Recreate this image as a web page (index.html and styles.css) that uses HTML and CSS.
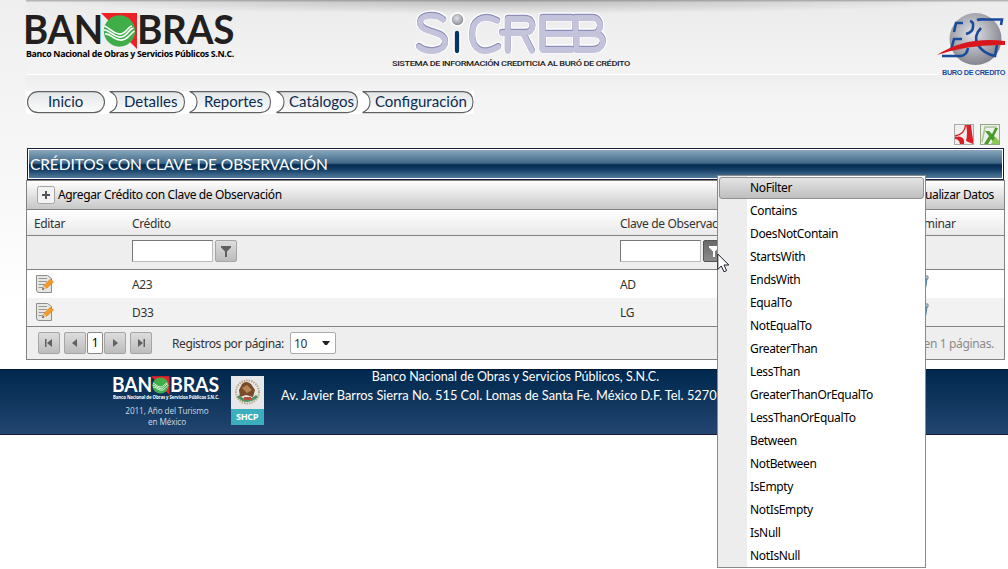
FILE: index.html
```html
<!DOCTYPE html>
<html lang="es">
<head>
<meta charset="utf-8">
<title>SICREB</title>
<link rel="stylesheet" href="styles.css">
</head>
<body>
<svg class="defs" width="0" height="0">
  <defs>
    <radialGradient id="orb" cx=".45" cy=".4" r=".6"><stop offset="0" stop-color="#e2e2e8"/><stop offset="1" stop-color="#85858f"/></radialGradient>
    <linearGradient id="pill" x1="0" y1="0" x2="0" y2="1"><stop offset="0" stop-color="#e3e6e7"/><stop offset="1" stop-color="#fbfbfb"/></linearGradient>
    <symbol id="emblem" viewBox="0 0 37 36">
      <path d="M0 0H36V36L30 30L9 9Z" fill="#ee2027"/>
      <circle cx="18.500" cy="18" r="15.700" fill="#3fae49"/>
      <path d="M3.500 13C9 15 11 20 18 21C25 22 27 13 31 13M3 17C9 17 11 23 18 24C26 25 27 16 32.500 15M4 21C10 20 12 27 19 27C27 28 29 20 33.500 18" fill="none" stroke="#fff" stroke-width="1.700"/>
    </symbol>
    <symbol id="edit" viewBox="0 0 20 20">
      <path d="M1.500 1.500H12.500L16.500 4.500V18.500H4Q1.500 18.500 1.500 16V2Z" fill="#e6e6e3" stroke="#8d8d8a"/>
      <path d="M3.500 4.500H12M3.500 7.500H12M3.500 10.500H10M3.500 13.500H8" stroke="#999"/>
      <path d="M8 14.500L9 11.500L15.500 5L18.500 8L12 14Z" fill="#f59a24" stroke="#d9771a" stroke-width=".6"/>
      <path d="M7.500 15.500L9 11.700L11.700 14.200Z" fill="#e8cf9e"/><path d="M7 16L8 13.800L9.300 15.200Z" fill="#333"/>
    </symbol>
    <symbol id="trash" viewBox="0 0 14 18"><path d="M0 1H13V4H0Z" fill="#c7dbe4" stroke="#6b8796"/><path d="M1 4H12L10 17H3Z" fill="#6fa6c0" stroke="#557f97"/><path d="M4 5V16M8 5V16" stroke="#d5e8f0"/></symbol>
  </defs>
</svg>
<header class="header">
  <svg class="brand" width="212" height="52" viewBox="0 0 212 52">
    <g fill="#231f20" font-family="Lato, sans-serif" font-weight="700" font-size="40.500">
      <text x="-3" y="35.500" textLength="80" lengthAdjust="spacingAndGlyphs">BAN</text>
      <text x="111" y="35.500" textLength="97" lengthAdjust="spacingAndGlyphs">BRAS</text>
    </g>
    <use href="#emblem" x="75" y="5" width="37" height="36"/>
    <text x="0" y="49" textLength="208" lengthAdjust="spacingAndGlyphs" class="brand-caption">Banco Nacional de Obras y Servicios Públicos S.N.C.</text>
  </svg>
  <svg class="sicreb" width="242" height="62" viewBox="0 0 242 62">
    <g fill="none" stroke-linecap="round" stroke-linejoin="round">
      <g transform="translate(1 0) scale(.965 1)">
        <path d="M52 11C46 5 28 5 28 14C28 25 54 21 54 33C54 44 34 44 27 38M108 12C91 4 82 13 82 26C82 41 93 47 109 38M119 42V10H137C147 10 147 24 137 24H113M135 25L144 42M185 9H155V41H185M157 25H206M189 24V9H207C217 9 217 25 207 25C222 25 220 41 207 41H190V24" stroke="#fff" stroke-width="9"/>
        <path d="M52 11C46 5 28 5 28 14C28 25 54 21 54 33C54 44 34 44 27 38M108 12C91 4 82 13 82 26C82 41 93 47 109 38M119 42V10H137C147 10 147 24 137 24H113M135 25L144 42M185 9H155V41H185M157 25H206M189 24V9H207C217 9 217 25 207 25C222 25 220 41 207 41H190V24" stroke="#8f8eb8" stroke-width="6.300"/>
        <path d="M52 12C46 6 28 6 28 15C28 26 54 22 54 34C54 45 34 45 27 39M108 13C91 5 82 14 82 27C82 42 93 48 109 39M119 43V11H137C147 11 147 25 137 25H113M135 26L144 43M185 10H155V42H185M157 26H206M189 25V10H207C217 10 217 26 207 26C222 26 220 42 207 42H190V25" stroke="#c3c3dc" stroke-width="5.800"/>
      </g>
      <path d="M65 26V43" stroke="#fff" stroke-width="7"/><path d="M65 25V43" stroke="#003467" stroke-width="4.300"/>
      <circle cx="65.500" cy="11.500" r="6.500" fill="url(#orb)" stroke="#fff" stroke-width="1.500"/>
    </g>
    <text x="0" y="57.500" textLength="238" lengthAdjust="spacingAndGlyphs" class="sicreb-caption">SISTEMA DE INFORMACIÓN CREDITICIA AL BURÓ DE CRÉDITO</text>
  </svg>
  <svg class="buro" width="72" height="68" viewBox="0 0 72 68">
    <circle cx="41.500" cy="31" r="26" fill="url(#orb)"/>
    <g fill="none" stroke="#194b9c" stroke-width="2.600"><path d="M20 24L22 15H29M32 26Q39 24 39 19Q40 14 36 13M17 42L20 31H28M8 48H27Q33 47 34 40"/><path d="M67 17L68 11.500H52Q45 11 43 12M47 20Q39 28 44 37Q50 46 61 48L63 37"/></g>
    <path d="M3 47Q32 28 71 33V37Q36 36 3 47Z" fill="#d8161c"/>
    <text x="8" y="67" textLength="63" lengthAdjust="spacingAndGlyphs" class="buro-caption">BURO DE CREDITO</text>
  </svg>
</header>
<nav class="nav">
  <a class="tab tab1"><svg width="80" height="23"><rect x="1.500" y=".6" width="77" height="21" rx="10.500"/></svg><span>Inicio</span></a>
  <a class="tab tab2"><svg width="78" height="23"><path d="M.5 .6H65.500Q75.500 1 75.500 11T65.500 21.600H.5Q8 18.500 8 11T.5 .6Z"/></svg><span>Detalles</span></a>
  <a class="tab tab3"><svg width="84" height="23"><path d="M-.5 .6H70.500Q80.500 1 80.500 11T70.500 21.600H-.5Q7 18.500 7 11T-.5 .6Z"/></svg><span>Reportes</span></a>
  <a class="tab tab4"><svg width="85" height="23"><path d="M.5 .6H71.500Q81.500 1 81.500 11T71.500 21.600H.5Q8 18.500 8 11T.5 .6Z"/></svg><span>Catálogos</span></a>
  <a class="tab tab5"><svg width="113" height="23"><path d="M1.500 .6H102Q112 1 112 11T102 21.600H1.500Q9 18.500 9 11T1.500 .6Z"/></svg><span>Configuración</span></a>
</nav>
<div class="exports">
  <svg width="20" height="21" viewBox="0 0 20 21"><rect x=".5" y=".5" width="19" height="20" fill="#f1eeee" stroke="#aaa"/><path d="M12 1H17Q18 10 19 15V20L12 17Q14 9 12 1Z" fill="#d91f25"/><path d="M11.500 1Q11 10 1 12" fill="none" stroke="#d91f25" stroke-width="1.300"/><path d="M1 13Q8 11 10 16V20H6Q5 15 1 15Z" fill="#d91f25"/></svg>
  <svg width="20" height="21" viewBox="0 0 20 21"><rect x=".5" y=".5" width="19" height="20" fill="#edf1e9" stroke="#91a981"/><path d="M2 18L5 3H17" fill="none" stroke="#a9c295" stroke-width="1.500"/><path d="M5 7H9L12 10L15 4H18L14 12L19 19H14L11 15L8 20H4L9 12Z" fill="#4b9b2c"/><path d="M16 13L19 17V20H11L14 15Z" fill="#8dc953"/></svg>
</div>
<h1 class="title"><span>CRÉDITOS CON CLAVE DE OBSERVACIÓN</span></h1>
<main class="grid">
  <div class="toolbar">
    <div class="add"><svg width="18" height="18"><rect x=".5" y=".5" width="17" height="17" rx="2" fill="#f3f3f3" stroke="#a5a5a5"/><path d="M5 9H13M9 5V13" stroke="#555" stroke-width="2"/></svg><span>Agregar Crédito con Clave de Observación</span></div>
    <span class="refresh">Actualizar Datos</span>
  </div>
  <div class="row heads"><span>Editar</span><span>Crédito</span><span class="clave">Clave de Observación</span><span class="del">Eliminar</span></div>
  <div class="row filters">
    <span></span>
    <div class="filter"><input aria-label="Crédito"><button aria-label="Filtrar"><svg width="12" height="12"><path d="M1 1H11V2.500L7 6.500V12H5V6.500L1 2.500Z"/></svg></button></div>
    <div class="filter"><input aria-label="Clave"><button class="active" aria-label="Filtrar"><svg width="12" height="12"><path d="M1 1H11V2.500L7 6.500V12H5V6.500L1 2.500Z"/></svg></button></div>
    <span></span>
  </div>
  <div class="row data"><svg class="edit" width="20" height="20"><use href="#edit"/></svg><span>A23</span><span>AD</span><svg class="trash" width="14" height="18"><use href="#trash"/></svg></div>
  <div class="row data alt"><svg class="edit" width="20" height="20"><use href="#edit"/></svg><span>D33</span><span>LG</span><svg class="trash" width="14" height="18"><use href="#trash"/></svg></div>
  <div class="pager">
    <button><svg width="10" height="10"><path d="M1 1H2.500V9H1ZM8 1V9L3 5Z"/></svg></button>
    <button class="prev"><svg width="10" height="10"><path d="M7 1V9L2 5Z"/></svg></button>
    <b class="page">1</b>
    <button><svg width="10" height="10"><path d="M3 1L8 5L3 9Z"/></svg></button>
    <button class="last"><svg width="10" height="10"><path d="M2 1L7 5L2 9ZM7.500 1H9V9H7.500Z"/></svg></button>
    <span class="size-label">Registros por página:</span>
    <div class="select"><span>10</span><svg width="8" height="5"><path d="M0 0H8L5 4H3Z"/></svg></div>
    <span class="total">en 1 páginas.</span>
  </div>
</main>
<footer class="footer">
  <div class="foot-brand">
    <svg width="108" height="26" viewBox="0 0 108 26">
      <g fill="#fff" font-family="Lato, sans-serif" font-weight="700" font-size="20"><text x="-1" y="17" textLength="40" lengthAdjust="spacingAndGlyphs">BAN</text><text x="57" y="17" textLength="49" lengthAdjust="spacingAndGlyphs">BRAS</text></g>
      <use href="#emblem" x="38" y="1" width="19" height="19"/>
      <text x="0" y="24" textLength="106" lengthAdjust="spacingAndGlyphs" class="foot-caption">Banco Nacional de Obras y Servicios Públicos S.N.C.</text>
    </svg>
    <p>2011, Año del Turismo<br>en México</p>
  </div>
  <svg class="shcp" width="33" height="49" viewBox="0 0 33 49"><path fill="#e6e7e8" d="M0 0H33V33H0Z"/><path fill="#3cafbd" d="M0 33H33V49H0Z"/><circle cx="16.500" cy="16" r="11.500" fill="none" stroke="#bba985" stroke-width="2" stroke-dasharray="1.500 1"/><path d="M11 8Q15 4 20 8L24 14L22 21L15 19L9 21L8 14Z" fill="#7b4a29"/><path d="M11 12L16 9L21 14L16 17Z" fill="#b58755"/><path d="M7 20Q16 29 26 20" fill="none" stroke="#4f9261" stroke-width="3"/><path d="M13 21H20V24H13Z" fill="#b74f3c"/><text x="5" y="43.500" textLength="22" lengthAdjust="spacingAndGlyphs" class="shcp-text">SHCP</text></svg>
  <div class="address"><p class="bank">Banco Nacional de Obras y Servicios Públicos, S.N.C.</p><p class="street">Av. Javier Barros Sierra No. 515 Col. Lomas de Santa Fe. México D.F. Tel. 5270</p></div>
</footer>
<ul class="menu">
  <li class="selected">NoFilter</li><li>Contains</li><li>DoesNotContain</li><li>StartsWith</li><li>EndsWith</li><li>EqualTo</li><li>NotEqualTo</li><li>GreaterThan</li><li>LessThan</li><li>GreaterThanOrEqualTo</li><li>LessThanOrEqualTo</li><li>Between</li><li>NotBetween</li><li>IsEmpty</li><li>NotIsEmpty</li><li>IsNull</li><li>NotIsNull</li>
</ul>
<svg class="cursor" width="13" height="20"><path d="M.8 1V16.500L4.300 13L7 18.800L9.600 17.600L7 12H11.800Z" fill="#fff" stroke="#181828"/></svg>
</body>
</html>
```
FILE: styles.css
```css
* { box-sizing: border-box; }
body { margin: 0; width: 1008px; height: 569px; overflow: hidden; position: relative; background: linear-gradient(#efefef, #f8f8f8 190px, #fff 300px); font: 12px "Noto Sans", "Open Sans", sans-serif; letter-spacing: -.35px; color: #333; }
p, h1, ul { margin: 0; padding: 0; }
svg { display: block; flex: none; overflow: visible; }
.defs { position: absolute; }
.header { height: 91px; margin-left: 26px; display: flex; align-items: flex-start; background: radial-gradient(ellipse 420px 14px at 480px 75px, rgba(110,110,110,.34), transparent) 0 75px / 100% 16px no-repeat, linear-gradient(#fff, #fff) 0 74px / 100% 1px no-repeat, linear-gradient(rgba(110,115,115,.55), rgba(110,115,115,.1)) 0 0 / 100% 2px no-repeat, radial-gradient(ellipse 480px 14px at 480px 0, rgba(90,90,90,.34), transparent) 0 0 / 100% 20px no-repeat, linear-gradient(#ebebeb, #f4f4f4 74px, #eeeeee 75px, #f3f3f3); }
.brand { margin-top: 8px; }
.sicreb { margin: 8px 0 0 154px; }
.buro { margin: 8px 0 0 300px; }
.brand-caption { font: 700 9.500px "Open Sans", sans-serif; }
.sicreb-caption { font: 500 8px Roboto, sans-serif; fill: #222; }
.buro-caption { font: 700 7px "Liberation Sans", sans-serif; fill: #194b9c; }
.nav { width: 448px; height: 23px; margin-left: 26px; background: #fff; display: grid; grid-template-columns: 83px 81px 86px 85px 113px; font: 15px/21px Lato, sans-serif; letter-spacing: 0; color: #0b2b50; }
.tab { position: relative; white-space: nowrap; }
.tab svg { position: absolute; left: 0; top: 0; fill: url(#pill); stroke: #5e6061; stroke-width: 1.100; }
.tab span { position: relative; display: block; padding-left: 15px; }
.tab1 span { padding-left: 22px; }
.tab3 span { padding-left: 14px; }
.tab4 span { padding-left: 13px; }
.tab5 span { padding-left: 14px; }
.exports { display: flex; gap: 6px; margin-left: 954px; height: 34px; padding-top: 10px; }
.title { width: 977px; height: 32px; margin-left: 27px; border: 1px solid #1b1b3c; padding: 1px; background: #fff; font: 15.500px/28px Lato, sans-serif; color: #fff; letter-spacing: -.1px; }
.title span { display: block; height: 28px; padding-left: 1px; background: linear-gradient(#88a8bd 0, #416989 47%, #032a50 53%, #174169 72%, #537b9b); }
.grid { width: 979px; height: 180px; margin-left: 26px; border: 1px solid #828282; background: #eee; }
.toolbar { height: 29px; display: flex; justify-content: space-between; align-items: center; padding: 0 10px; border-bottom: 1px solid #828282; background: linear-gradient(#fff, #c7c7c7); color: #000; }
.toolbar span { position: relative; top: -1px; }
.add { display: flex; align-items: center; gap: 3px; }
.row { display: grid; grid-template-columns: 98px 488px 305px 1fr; align-items: center; padding-left: 7px; }
.heads { height: 26px; border-bottom: 1px solid #828282; background: linear-gradient(#fff, #e9e9e9); }
.heads span { padding-top: 2px; }
.heads .del { margin-left: -13px; }
.filters { height: 34px; border-bottom: 1px solid #828282; align-items: start; padding-top: 4px; }
.filter { display: flex; gap: 2px; }
input { width: 81px; height: 22px; border: 1px solid #bcbcbc; border-top-color: #777; border-left-color: #777; background: #fff; padding: 0; }
button { width: 22px; height: 22px; padding: 0; border: 1px solid #a6a6a6; border-radius: 2px; background: linear-gradient(#ddd, #bcbcbc); display: flex; align-items: center; justify-content: center; fill: #606060; }
.active { background: linear-gradient(#696969, #8b8b8b); border-color: #555; fill: #fff; }
.data { height: 28px; background: #fff; }
.data.alt { height: 29px; background: #f2f2f2; border-bottom: 1px solid #828282; }
.data span { padding-top: 1px; }
.edit { margin: -1px 0 0 1px; }
.trash { margin-left: -10px; }
.pager { height: 32px; display: flex; align-items: center; padding: 0 10px 0 11px; }
.prev { margin-left: 4px; }
.last { margin-left: 4px; }
.page { width: 16px; height: 22px; margin: 0 1px; border: 1px solid #888; border-radius: 2px; background: #fff; color: #000; font-weight: 400; line-height: 20px; text-align: center; }
.size-label { width: 112px; margin-left: 20px; white-space: nowrap; letter-spacing: -.4px; }
.select { width: 46px; height: 22px; margin-left: 6px; padding: 0 5px 0 3px; border: 1px solid #aaa; border-radius: 2px; background: #fff; display: flex; align-items: center; justify-content: space-between; fill: #222; }
.total { margin-left: auto; color: #8b8b8b; }
.footer { width: 1008px; height: 66px; margin-top: 9px; border-top: 1px solid #001b35; border-bottom: 1px solid #1b1b3c; background: linear-gradient(#00274e, #22466f); display: flex; align-items: flex-start; color: #fff; }
.foot-brand { width: 108px; margin: 5px 0 0 113px; font: 8.200px/11px "Open Sans", sans-serif; letter-spacing: -.1px; text-align: center; color: #d1dbe4; }
.foot-brand p { padding-top: 4px; }
.foot-caption { font: 700 5px "Open Sans", sans-serif; fill: #fff; }
.shcp { margin: 6px 0 0 10px; }
.shcp-text { font: 700 8px "Open Sans", sans-serif; fill: #fff; }
.address { width: 469px; margin: -2px 0 0 17px; font: 12.800px/18px Lato, sans-serif; letter-spacing: 0; text-align: center; white-space: nowrap; }
.bank { font-size: 12.500px; }
.street { text-align: left; }
.menu { position: absolute; left: 717px; top: 175px; width: 209px; height: 393px; border: 1px solid #898989; padding: 1px; list-style: none; background: linear-gradient(90deg, #ededed 29px, #fff 29px); color: #000; }
.menu li { height: 23px; padding-left: 31px; line-height: 22px; }
.menu .selected { height: 22px; margin-bottom: 1px; padding-left: 30px; border: 1px solid #919191; border-radius: 3px; background: linear-gradient(#e4e4e4, #bebebe); line-height: 20px; }
.cursor { position: absolute; left: 717px; top: 253px; }
```
